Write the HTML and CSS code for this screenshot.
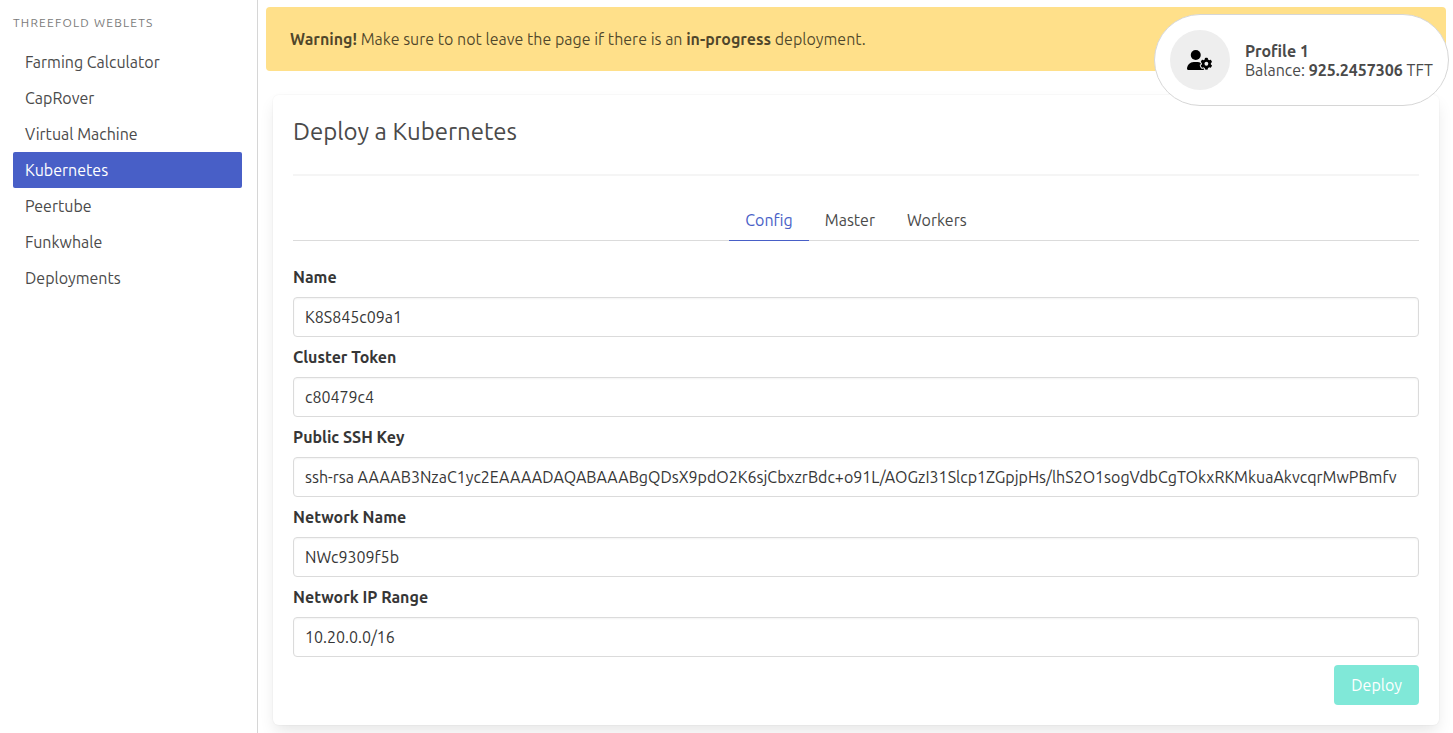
FILE: index.html
```html
<!DOCTYPE html>
<html lang="en">
<head>
<meta charset="utf-8">
<meta name="viewport" content="width=device-width, initial-scale=1">
<title>Threefold Weblets</title>
<link rel="stylesheet" href="styles.css">
</head>
<body>
<div class="layout">
  <aside class="sidebar">
    <p class="menu-label">Threefold Weblets</p>
    <nav class="menu-list">
      <a href="#farming">Farming Calculator</a>
      <a href="#caprover">CapRover</a>
      <a href="#vm">Virtual Machine</a>
      <a href="#kubernetes" class="is-active" aria-current="page">Kubernetes</a>
      <a href="#peertube">Peertube</a>
      <a href="#funkwhale">Funkwhale</a>
      <a href="#deployments">Deployments</a>
    </nav>
  </aside>
  <main class="content">
    <div class="notification"><strong>Warning!</strong> Make sure to not leave the page if there is an <strong>in-progress</strong> deployment.</div>
    <form class="box">
      <h1 class="title">Deploy a Kubernetes</h1>
      <hr class="divider">
      <nav class="tabs">
        <a href="#config" class="is-active">Config</a>
        <a href="#master">Master</a>
        <a href="#workers">Workers</a>
      </nav>
      <div class="field">
        <label for="name">Name</label>
        <input id="name" type="text" value="K8S845c09a1">
      </div>
      <div class="field">
        <label for="token">Cluster Token</label>
        <input id="token" type="text" value="c80479c4">
      </div>
      <div class="field">
        <label for="ssh">Public SSH Key</label>
        <input id="ssh" type="text" value="ssh-rsa AAAAB3NzaC1yc2EAAAADAQABAAABgQDsX9pdO2K6sjCbxzrBdc+o91L/AOGzI31Slcp1ZGpjpHs/lhS2O1sogVdbCgTOkxRKMkuaAkvcqrMwPBmfv">
      </div>
      <div class="field">
        <label for="network">Network Name</label>
        <input id="network" type="text" value="NWc9309f5b">
      </div>
      <div class="field">
        <label for="range">Network IP Range</label>
        <input id="range" type="text" value="10.20.0.0/16">
      </div>
      <div class="actions">
        <button type="submit" class="deploy" disabled>Deploy</button>
      </div>
    </form>
  </main>
</div>
<section class="profile" aria-label="Profile">
  <button type="button" class="avatar" aria-label="Profile settings">
    <svg class="avatar-icon" viewBox="0 0 640 512" aria-hidden="true">
      <circle cx="224" cy="128" r="128"/>
      <path d="M173 304H275C371 304 448 382 448 482C448 499 435 512 418 512H30C13 512 0 499 0 482C0 382 78 304 173 304Z"/>
      <path class="gear" transform="translate(0 32)" d="M610.500 341.300c2.600-14.100 2.600-28.500 0-42.600l25.800-14.900c3-1.700 4.300-5.200 3.300-8.500-6.700-21.600-18.200-41.200-33.200-57.400-2.300-2.500-6-3.100-9-1.400l-25.800 14.900c-10.900-9.300-23.400-16.500-36.900-21.300v-29.800c0-3.400-2.400-6.400-5.700-7.100-22.300-5-45-4.800-66.200 0-3.300.7-5.700 3.700-5.700 7.100v29.800c-13.500 4.800-26 12-36.900 21.300l-25.800-14.900c-2.900-1.700-6.700-1.100-9 1.400-15 16.200-26.500 35.800-33.200 57.400-1 3.300.4 6.800 3.300 8.500l25.800 14.900c-2.600 14.100-2.600 28.500 0 42.600l-25.800 14.900c-3 1.700-4.300 5.200-3.300 8.500 6.700 21.600 18.200 41.100 33.200 57.400 2.300 2.500 6 3.100 9 1.400l25.800-14.900c10.900 9.300 23.400 16.500 36.900 21.300v29.800c0 3.400 2.400 6.400 5.700 7.100 22.300 5 45 4.800 66.200 0 3.300-.7 5.700-3.700 5.700-7.100v-29.800c13.500-4.800 26-12 36.900-21.300l25.800 14.900c2.900 1.700 6.700 1.100 9-1.400 15-16.200 26.500-35.800 33.200-57.400 1-3.300-.4-6.800-3.300-8.500l-25.800-14.900z"/>
      <circle class="gear-hole" cx="496" cy="352" r="49"/>
    </svg>
  </button>
  <div class="profile-text">
    <p><strong>Profile 1</strong></p>
    <p>Balance: <strong>925.2457306</strong> TFT</p>
  </div>
</section>
</body>
</html>
```
FILE: styles.css
```css
* {
  box-sizing: border-box;
}

body {
  margin: 0;
  background: #fff;
  color: #4a4a4a;
  font-family: Ubuntu, "Noto Sans", sans-serif;
  font-size: 16px;
  line-height: 24px;
  text-rendering: optimizeLegibility;
}

p {
  margin: 0;
}

a {
  color: inherit;
  text-decoration: none;
}

.layout {
  display: flex;
  min-height: 100vh;
}

.sidebar {
  flex: 0 0 258px;
  padding: 14px 15px 14px 13px;
  border-right: 1px solid #d6d6d6;
}

.menu-label {
  margin-bottom: 12px;
  color: #7a7a7a;
  font-size: 12px;
  line-height: 18px;
  letter-spacing: 0.1em;
  text-transform: uppercase;
}

.menu-list {
  display: flex;
  flex-direction: column;
}

.menu-list a {
  padding: 6px 12px;
  border-radius: 2px;
}

.menu-list .is-active {
  background: #485fc7;
  color: #fff;
}

.content {
  flex: 1;
  min-width: 0;
  padding: 7px 7px 8px 8px;
}

.notification {
  padding: 20px 24px;
  border-radius: 4px;
  background: #ffe08a;
  color: rgba(0, 0, 0, 0.7);
}

.box {
  margin: 24px 7px 0;
  padding: 20px;
  border-radius: 6px;
  background: #fff;
  box-shadow: 0 8px 16px -2px rgba(10, 10, 10, 0.1), 0 0 0 1px rgba(10, 10, 10, 0.02);
}

.title {
  margin: 0;
  font-size: 24px;
  font-weight: 400;
  line-height: 34px;
}

.divider {
  height: 2px;
  margin: 25px 0 24px;
  border: 0;
  background: #f5f5f5;
}

.tabs {
  display: flex;
  justify-content: center;
  margin-bottom: 24px;
  box-shadow: inset 0 -1px #dbdbdb;
}

.tabs a {
  padding: 8px 16px;
  border-bottom: 1px solid transparent;
}

.tabs .is-active {
  border-color: #485fc7;
  color: #485fc7;
}

.field label {
  display: block;
  margin-bottom: 8px;
  color: #363636;
  font-weight: 700;
}

.field input {
  display: block;
  width: 100%;
  height: 40px;
  margin-bottom: 8px;
  padding: 7px 11px;
  border: 1px solid #dbdbdb;
  border-radius: 4px;
  background: #fff;
  box-shadow: inset 0 1px 2px rgba(10, 10, 10, 0.05);
  color: #363636;
  font: inherit;
}

.actions {
  display: flex;
  justify-content: flex-end;
}

.deploy {
  height: 40px;
  padding: 0 17px;
  border: 0;
  border-radius: 4px;
  background: #80e8d8;
  color: #fff;
  font: inherit;
}

.profile {
  position: fixed;
  top: 14px;
  right: 4px;
  display: flex;
  align-items: center;
  gap: 15px;
  padding: 15px;
  border: 1px solid #d6d6d6;
  border-radius: 46px;
  background: #fff;
  line-height: 19px;
}

.profile-text {
  padding-top: 2px;
}

.avatar {
  display: flex;
  align-items: center;
  justify-content: center;
  width: 60px;
  height: 60px;
  padding: 0;
  border: 0;
  border-radius: 50%;
  background: #eee;
}

.avatar-icon {
  width: 25px;
  height: 20px;
  overflow: visible;
}

.gear {
  stroke: #eee;
  stroke-width: 50px;
  paint-order: stroke;
}

.gear-hole {
  fill: #eee;
}
```
